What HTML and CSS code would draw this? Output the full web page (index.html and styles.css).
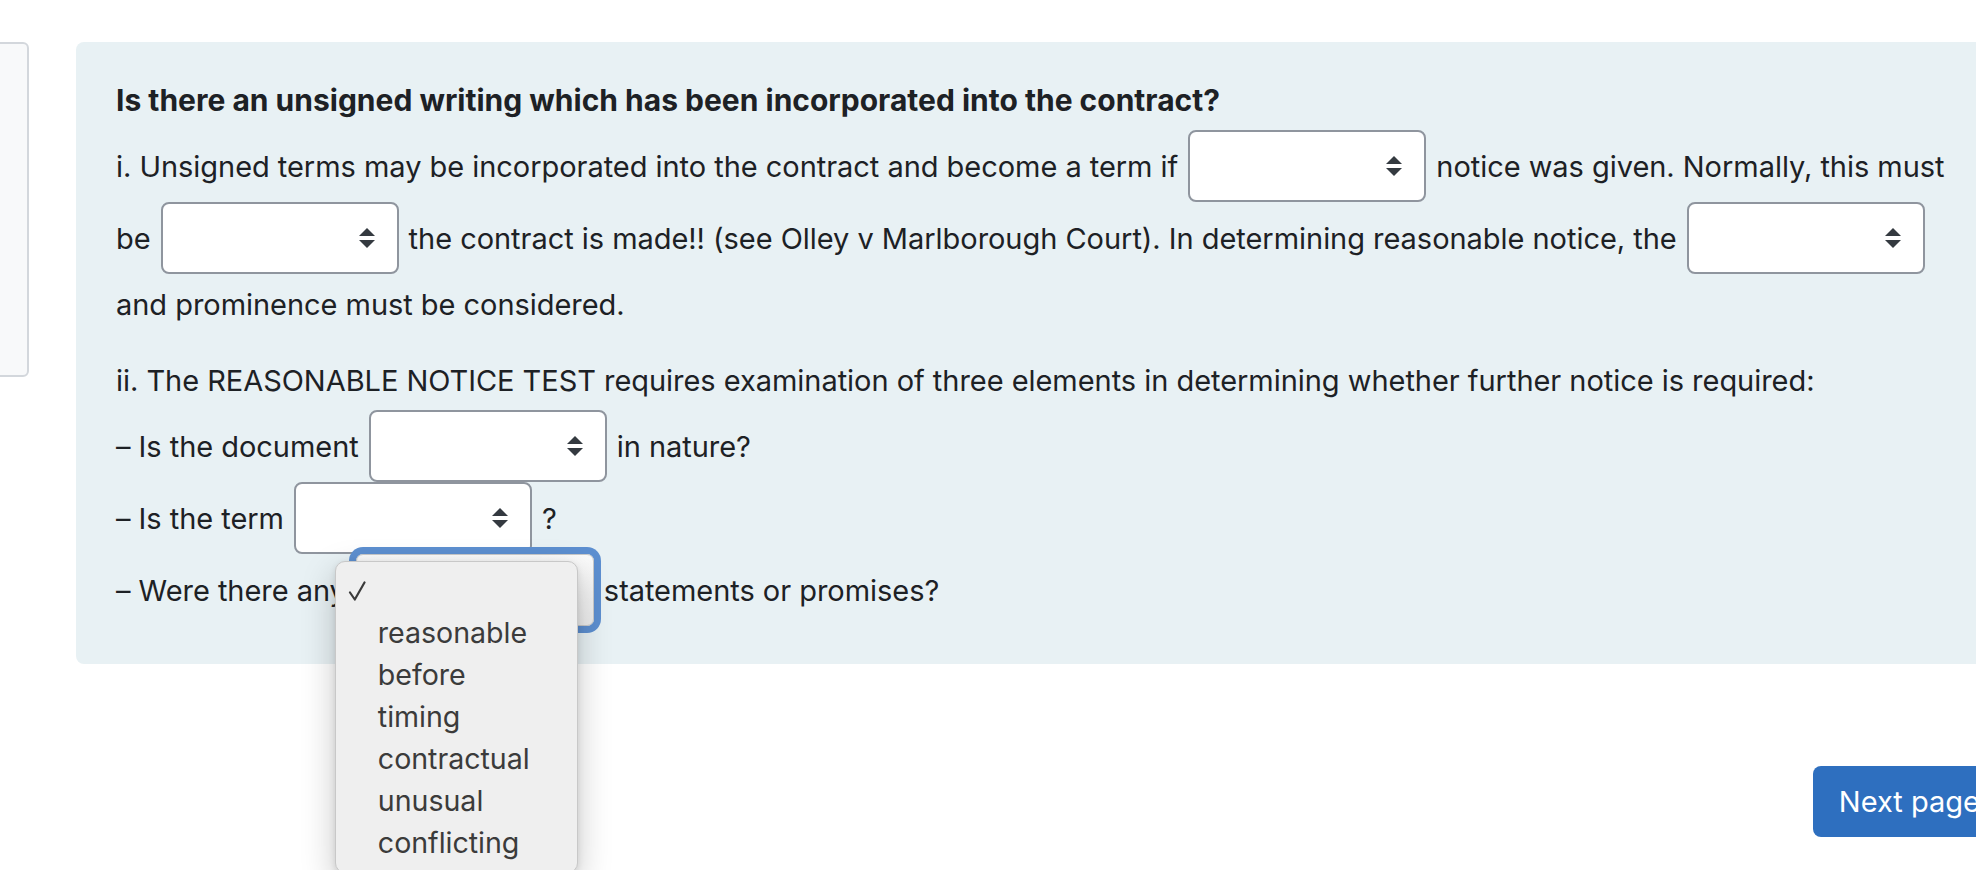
FILE: index.html
```html
<!DOCTYPE html>
<html lang="en">
<head>
<meta charset="utf-8">
<title>Question</title>
<link rel="stylesheet" href="styles.css">
</head>
<body>
<div class="page">
  <aside class="sidebar"></aside>
  <main class="content">
    <div class="formulation">
      <div class="row text head mb7"><strong>Is there an unsigned writing which has been incorporated into the contract?</strong></div>

      <div class="row sel">i. Unsigned terms may be incorporated into the contract and become a term if
        <span class="select"><svg class="arrow" viewBox="0 0 4 5"><path d="M2 0L0 2h4zm0 5L0 3h4z"/></svg></span>
        notice was given. Normally, this must</div>
      <div class="row sel mb8">be
        <span class="select"><svg class="arrow" viewBox="0 0 4 5"><path d="M2 0L0 2h4zm0 5L0 3h4z"/></svg></span>
        the contract is made!! (see Olley v Marlborough Court). In determining reasonable notice, the
        <span class="select"><svg class="arrow" viewBox="0 0 4 5"><path d="M2 0L0 2h4zm0 5L0 3h4z"/></svg></span></div>
      <div class="row text mb31">and prominence must be considered.</div>

      <div class="row text mb7">ii. The REASONABLE NOTICE TEST requires examination of three elements in determining whether further notice is required:</div>
      <div class="row sel">– Is the document
        <span class="select"><svg class="arrow" viewBox="0 0 4 5"><path d="M2 0L0 2h4zm0 5L0 3h4z"/></svg></span>
        in nature?</div>
      <div class="row sel">– Is the term
        <span class="select"><svg class="arrow" viewBox="0 0 4 5"><path d="M2 0L0 2h4zm0 5L0 3h4z"/></svg></span>
        ?</div>
      <div class="row sel">– Were there any
        <span class="select focus">
          <span class="menu">
            <span class="opt checked"><svg class="check" viewBox="0 0 18 20"><path d="M2 11.5L6.8 18.5L16.5 1.5"/></svg></span>
            <span class="opt">reasonable</span>
            <span class="opt">before</span>
            <span class="opt">timing</span>
            <span class="opt">contractual</span>
            <span class="opt">unusual</span>
            <span class="opt">conflicting</span>
          </span>
        </span>
        statements or promises?</div>
    </div>
    <div class="nav">
      <button class="next" type="button">Next page</button>
    </div>
  </main>
</div>
</body>
</html>
```
FILE: styles.css
```css
html, body {
  margin: 0;
  padding: 0;
  background: #ffffff;
  overflow: hidden;
}

body {
  width: 1976px;
  height: 870px;
  font-family: Inter, "Noto Sans", "Liberation Sans", sans-serif;
  font-size: 29px;
  letter-spacing: -0.04px;
  color: #1d2125;
}

.page {
  display: flex;
  align-items: flex-start;
  padding-top: 42px;
}

.sidebar {
  flex: none;
  width: 45px;
  height: 331px;
  margin-left: -20px;
  background: #f8f9fa;
  border: 2px solid #d3d7dc;
  border-radius: 6px;
}

.content {
  flex: none;
  width: 1930px;
  margin-left: 47px;
  display: flex;
  flex-direction: column;
}

.formulation {
  background: #e8f1f4;
  border-radius: 8px;
  padding: 36px 40px 38px 40px;
}

.row {
  display: flex;
  align-items: center;
  gap: 10px;
  white-space: nowrap;
  line-height: 45px;
}

.row.text {
  height: 45px;
}

.row.sel {
  height: 72px;
}

.head strong {
  font-size: 30px;
  font-weight: 700;
  letter-spacing: 0;
}

.mb7 { margin-bottom: 7px; }
.mb8 { margin-bottom: 8px; }
.mb31 { margin-bottom: 31px; }

.select {
  position: relative;
  flex: none;
  box-sizing: border-box;
  width: 238px;
  height: 72px;
  background: #ffffff;
  border: 2px solid #8f959e;
  border-radius: 8px;
  display: flex;
  align-items: center;
  justify-content: flex-end;
  padding-right: 22px;
}

.arrow {
  width: 16px;
  height: 20px;
  fill: #343a40;
}

.select.focus {
  background: linear-gradient(#fbfbfb, #ececec);
  border: 1px solid #c9c9c9;
  box-shadow: 0 0 0 7px #5d8fd0;
  border-radius: 7px;
}

.menu {
  position: absolute;
  left: -22px;
  top: 6px;
  z-index: 5;
  box-sizing: border-box;
  width: 243px;
  padding: 8px 0;
  display: flex;
  flex-direction: column;
  background: #efefef;
  border: 1px solid #c8c8c8;
  border-radius: 10px;
  box-shadow: 0 12px 34px rgba(0, 0, 0, 0.22), 0 2px 6px rgba(0, 0, 0, 0.1);
}

.opt {
  display: flex;
  align-items: center;
  height: 42px;
  line-height: 42px;
  padding-left: 42px;
  font-size: 28.6px;
  color: #3b3b3b;
}

.opt.checked {
  padding-left: 12px;
}

.check {
  width: 18px;
  height: 20px;
  fill: none;
  stroke: #3b3b3b;
  stroke-width: 2.2;
  stroke-linecap: round;
  stroke-linejoin: round;
}

.nav {
  display: flex;
  justify-content: flex-end;
  margin-top: 102px;
}

.next {
  height: 71px;
  padding: 0 26px;
  background: #2e6fbf;
  color: #ffffff;
  border: none;
  border-radius: 8px;
  font-family: Inter, "Noto Sans", "Liberation Sans", sans-serif;
  font-size: 29px;
}
```
